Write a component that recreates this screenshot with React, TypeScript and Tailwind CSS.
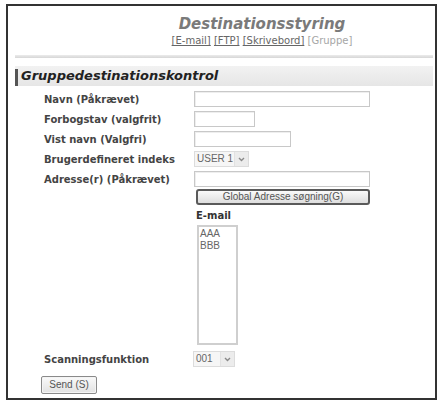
import React from "react";

const verdana = "font-['DejaVu_Sans',Verdana,sans-serif]";
const arial = "font-['Liberation_Sans',Arial,sans-serif]";

function TextBox({ w }: { w: string }) {
  return <div className={`${w} h-[16px] border border-[#c8c8c8] bg-white shadow-[inset_1px_1px_0_#eee]`} />;
}

function FakeSelect({ value, w }: { value: string; w: string }) {
  return (
    <div className={`${w} ${arial} flex h-[16px] items-center border border-[#dcdcdc] bg-[#f6f6f6] text-[10px] text-[#666]`}>
      <span className="flex-1 pl-[2px] leading-none">{value}</span>
      <span className="flex h-full w-[14px] items-center justify-center border-l border-[#e2e2e2] bg-[#ececec]">
        <svg width="7" height="5" viewBox="0 0 7 5">
          <path d="M1 1 L3.5 3.5 L6 1" fill="none" stroke="#8a8a8a" strokeWidth="1.4" />
        </svg>
      </span>
    </div>
  );
}

function Row({ label, children }: { label: string; children: React.ReactNode }) {
  return (
    <div className="flex h-[20px] items-center pl-[36px]">
      <span className={`${verdana} w-[150px] text-[10px] font-bold text-[#444]`}>{label}</span>
      {children}
    </div>
  );
}

export default function App() {
  return (
    <div className="h-[403px] w-[439px] bg-white pl-[6px] pt-[4px]">
      <div className="flex h-[396px] w-[431px] flex-col border-2 border-[#333]">
        <header className="flex flex-col items-center pl-[81px] pt-[9px]">
          <h1 className={`${verdana} text-[15px] font-bold italic leading-[18px] text-[#7a7a7a]`}>
            Destinationsstyring
          </h1>
          <p className={`${verdana} mt-[2px] text-[10px] leading-[12px] text-[#666]`}>
            <span className="underline">[E-mail]</span> <span className="underline">[FTP]</span>{" "}
            <span className="underline">[Skrivebord]</span> <span className="text-[#a6a6a6]">[Gruppe]</span>
          </p>
        </header>

        <div className="ml-[7px] mr-[2px] mt-[8px] h-[3px] bg-gradient-to-b from-[#ececec] to-[#d6d6d6]" />

        <div className="ml-[7px] mr-[2px] mt-[8px] flex h-[20px] items-center bg-gradient-to-b from-[#f2f2f2] to-[#e6e6e6]">
          <span className="h-[17px] w-[3px] self-end bg-[#555]" />
          <span className={`${verdana} pl-[3px] text-[13px] font-bold italic text-[#222]`}>
            Gruppedestinationskontrol
          </span>
        </div>

        <div className="mt-[3px] flex flex-col">
          <Row label="Navn (Påkrævet)">
            <TextBox w="w-[176px]" />
          </Row>
          <Row label="Forbogstav (valgfrit)">
            <TextBox w="w-[61px]" />
          </Row>
          <Row label="Vist navn (Valgfri)">
            <TextBox w="w-[97px]" />
          </Row>
          <Row label="Brugerdefineret indeks">
            <FakeSelect value="USER 1" w="w-[55px]" />
          </Row>
          <Row label="Adresse(r) (Påkrævet)">
            <TextBox w="w-[176px]" />
          </Row>

          <div className="flex flex-col pl-[188px]">
            <button
              className={`${arial} h-[16px] w-[174px] rounded-[3px] border-2 border-[#5a5a5a] bg-gradient-to-b from-[#fafafa] to-[#dedede] text-[10px] leading-none text-[#555]`}
            >
              Global Adresse søgning(G)
            </button>
            <span className={`${verdana} mt-[5px] text-[10px] font-bold leading-[12px] text-[#333]`}>E-mail</span>
            <div
              className={`${arial} ml-[1px] mt-[3px] flex h-[120px] w-[41px] flex-col border-2 border-[#cfcfcf] bg-white pl-[1px] pt-[1px] text-[10px] leading-[12px] text-[#666]`}
            >
              <span>AAA</span>
              <span>BBB</span>
            </div>
          </div>

          <div className="mt-[4px]">
            <Row label="Scanningsfunktion">
              <div className="-ml-[1px]">
                <FakeSelect value="001" w="w-[42px]" />
              </div>
            </Row>
          </div>

          <div className="mt-[7px] flex pl-[33px]">
            <button
              className={`${arial} h-[18px] w-[56px] rounded-[2px] border border-[#8a8a8a] bg-gradient-to-b from-[#fafafa] to-[#e2e2e2] text-[10px] leading-none text-[#555] shadow-[inset_0_0_0_1px_#f4f4f4]`}
            >
              Send (S)
            </button>
          </div>
        </div>
      </div>
    </div>
  );
}
